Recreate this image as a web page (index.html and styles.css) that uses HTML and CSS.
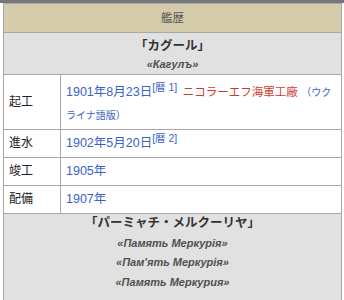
FILE: index.html
```html
<!DOCTYPE html>
<html lang="ja">
<head>
<meta charset="utf-8">
<link rel="stylesheet" href="styles.css">
</head>
<body>
<div class="topbar"></div>
<table class="infobox">
  <tr><th colspan="2" class="title">艦歴</th></tr>
  <tr>
    <td colspan="2" class="section first">
      <div class="name">「カグール」</div>
      <div class="alt">«Кагулъ»</div>
    </td>
  </tr>
  <tr class="multi">
    <td class="label">起工</td>
    <td class="value"><a class="link">1901年8月23日</a><sup class="ref">[暦 1]</sup> <a class="red">ニコラーエフ海軍工廠</a> <span class="small">（ウクライナ語版）</span></td>
  </tr>
  <tr>
    <td class="label">進水</td>
    <td class="value"><a class="link">1902年5月20日</a><sup class="ref">[暦 2]</sup></td>
  </tr>
  <tr>
    <td class="label">竣工</td>
    <td class="value"><a class="link">1905年</a></td>
  </tr>
  <tr>
    <td class="label">配備</td>
    <td class="value"><a class="link">1907年</a></td>
  </tr>
  <tr>
    <td colspan="2" class="section second">
      <div class="name">「パーミャチ・メルクーリヤ」</div>
      <div class="alt">«Память Меркурія»</div>
      <div class="alt">«Пам'ять Меркурія»</div>
      <div class="alt">«Память Меркурия»</div>
    </td>
  </tr>
  <tr class="last">
    <td class="label"></td>
    <td class="value"></td>
  </tr>
</table>
</body>
</html>
```

FILE: styles.css
```css
html, body {
  margin: 0;
  padding: 0;
  background: #ffffff;
}
body {
  font-family: "Liberation Sans", "Noto Sans CJK JP", sans-serif;
  font-size: 12px;
  color: #202122;
  overflow: hidden;
}
.topbar {
  height: 3px;
  background: #77777b;
}
.infobox {
  border-collapse: collapse;
  margin-left: 3px;
  width: 339px;
  border: 1px solid #8a8a8a;
}
.infobox td,
.infobox th {
  border: 1px solid #a8a8a8;
}
.title {
  background: #d4ccab;
  color: #555;
  font-weight: normal;
  font-size: 11.5px;
  line-height: 20px;
  padding: 4px 0 4px;
  text-align: center;
}
.section {
  background: #e1e1e1;
  text-align: center;
}
.section .name {
  font-weight: bold;
  font-size: 12.5px;
  color: #333;
}
.section .alt {
  font-weight: bold;
  font-style: italic;
  font-size: 11px;
  color: #505050;
}
.section.first {
  padding: 4px 0 1px;
}
.section.first .name,
.section.first .alt {
  line-height: 18px;
}
.section.second {
  padding: 0 0 8px;
}
.section.second .name,
.section.second .alt {
  line-height: 19.5px;
}
.label {
  width: 46px;
  padding: 3px 5px 4px;
  line-height: 20px;
  font-size: 12px;
  vertical-align: middle;
}
.value {
  padding: 3px 3px 4px 5px;
  line-height: 20px;
  font-size: 12.5px;
}
.multi .value {
  line-height: 22px;
  padding: 6px 3px 2px 5px;
}
.link {
  color: #3a62c8;
}
.red {
  color: #cc3a2e;
  font-size: 11.5px;
}
.ref {
  color: #3a62c8;
  font-size: 10.5px;
  line-height: 1;
  vertical-align: 5px;
  margin-right: 2px;
}
.small {
  color: #3a62c8;
  font-size: 10px;
}
.last td {
  height: 20px;
}
```
